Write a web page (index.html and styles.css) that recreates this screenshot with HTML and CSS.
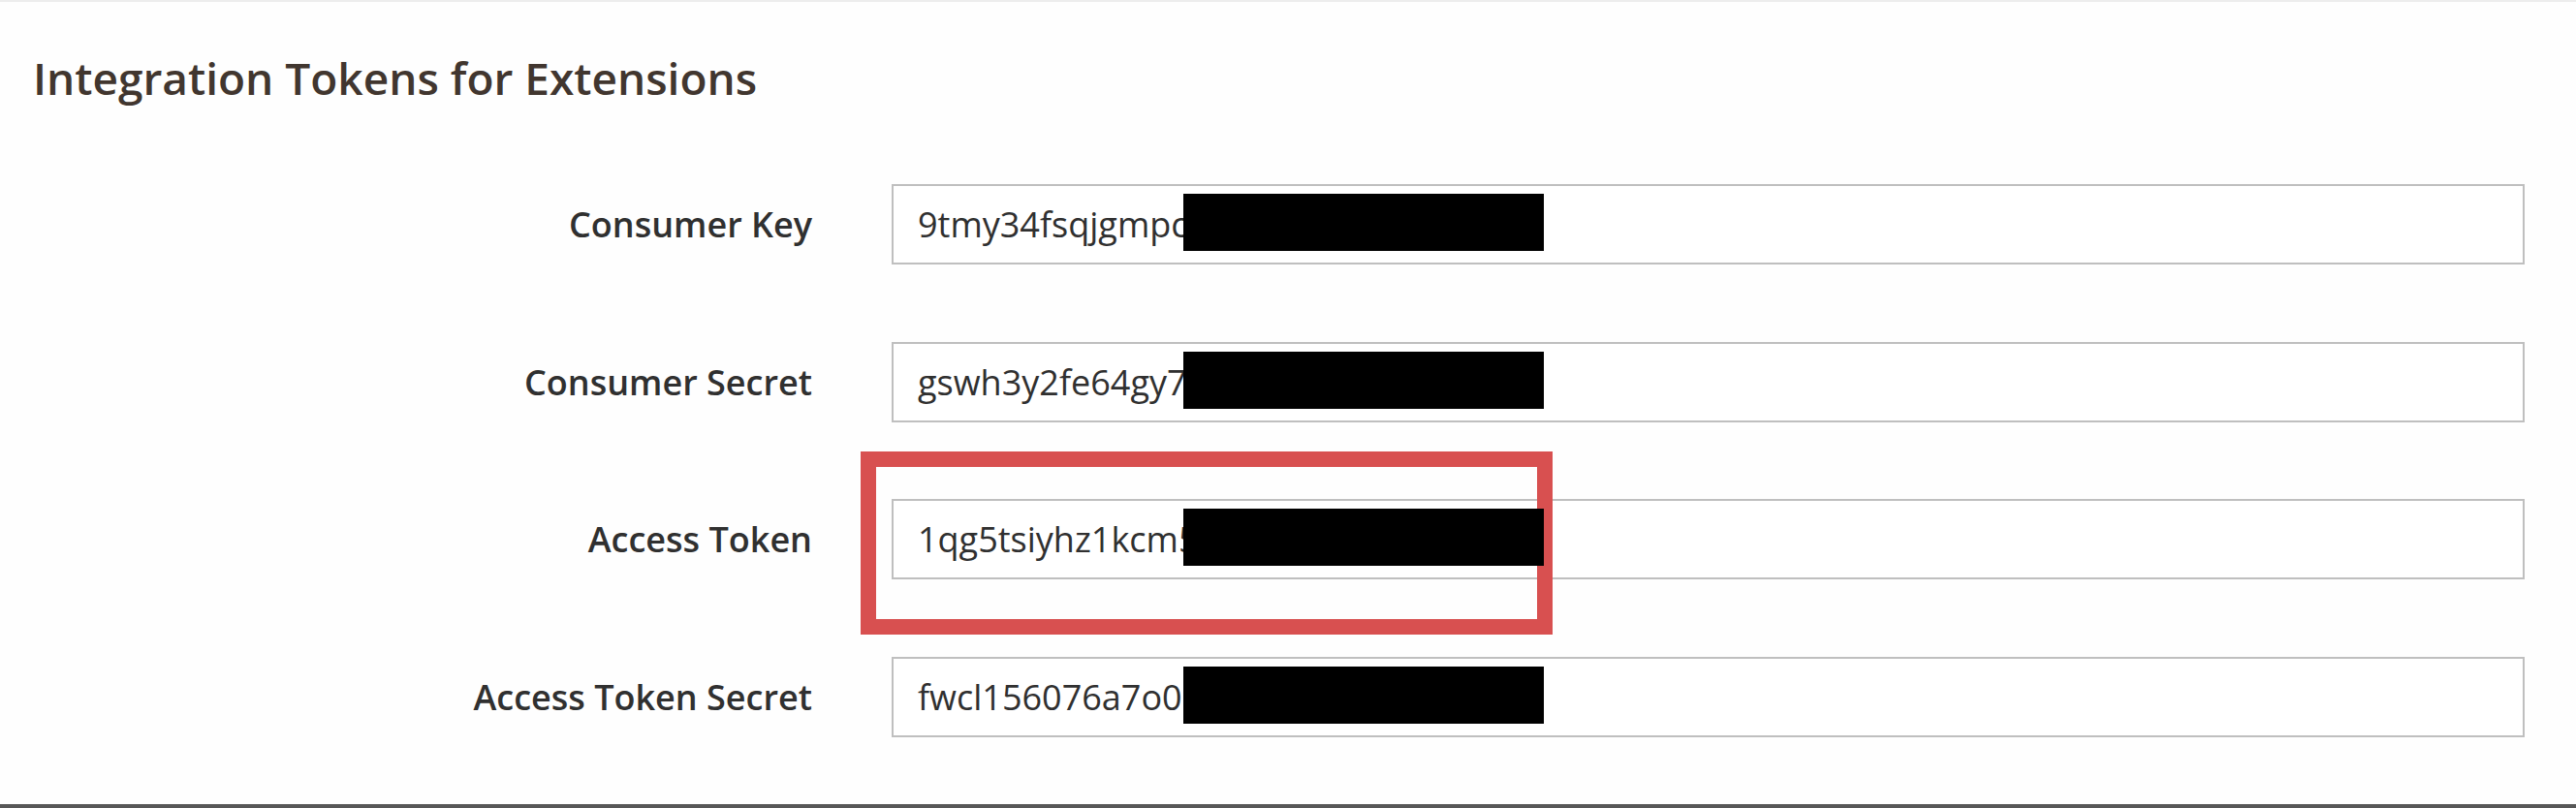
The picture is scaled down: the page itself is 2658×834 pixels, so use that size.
FILE: index.html
```html
<!DOCTYPE html>
<html lang="en">
<head>
  <meta charset="UTF-8" />
  <meta name="viewport" content="width=device-width, initial-scale=1.0"/>
  <title>Integration Tokens for Extensions</title>
  <link rel="stylesheet" href="styles.css">
</head>
<body>
  <div class="page">
    <h1 class="section-title">Integration Tokens for Extensions</h1>
    <div class="token-form">
      <label class="token-label">Consumer Key</label>
      <div class="token-field">
        <span class="token-value">9tmy34fsqjgmpc</span>
        <span class="redact"></span>
      </div>

      <label class="token-label">Consumer Secret</label>
      <div class="token-field">
        <span class="token-value">gswh3y2fe64gy7</span>
        <span class="redact"></span>
      </div>

      <label class="token-label">Access Token</label>
      <div class="token-field">
        <span class="token-value">1qg5tsiyhz1kcm5</span>
        <span class="highlight"></span>
        <span class="redact"></span>
      </div>

      <label class="token-label">Access Token Secret</label>
      <div class="token-field">
        <span class="token-value">fwcl156076a7o0</span>
        <span class="redact"></span>
      </div>
    </div>
  </div>
</body>
</html>
```

FILE: styles.css
```css
body {
  margin: 0;
  padding: 0;
  background: #fefefe;
  font-family: "Open Sans", "Noto Sans", sans-serif;
}

.page {
  height: 100vh;
  box-sizing: border-box;
  border-top: 2px solid #ededed;
  border-bottom: 4px solid #575757;
  padding: 50px 53px 0 34px;
}

.section-title {
  margin: 0;
  font-size: 46px;
  line-height: 56px;
  font-weight: 600;
  color: #41362f;
}

.token-form {
  display: grid;
  grid-template-columns: 804px 1fr;
  column-gap: 82px;
  row-gap: 79.6px;
  margin-top: 82px;
  align-items: center;
}

.token-label {
  text-align: right;
  font-size: 36px;
  font-weight: 600;
  color: #303030;
}

.token-field {
  position: relative;
  height: 83px;
  box-sizing: border-box;
  border: 2px solid #bfbfbf;
  background: #fff;
  padding-left: 25px;
  display: flex;
  align-items: center;
  font-size: 36px;
  color: #303030;
  white-space: nowrap;
}

.redact {
  position: absolute;
  left: 299px;
  top: 8px;
  width: 372px;
  height: 59px;
  background: #000;
  z-index: 2;
}

.highlight {
  position: absolute;
  left: -34px;
  top: -51px;
  width: 714px;
  height: 189px;
  box-sizing: border-box;
  border: 16px solid #d85050;
  z-index: 1;
}
```
